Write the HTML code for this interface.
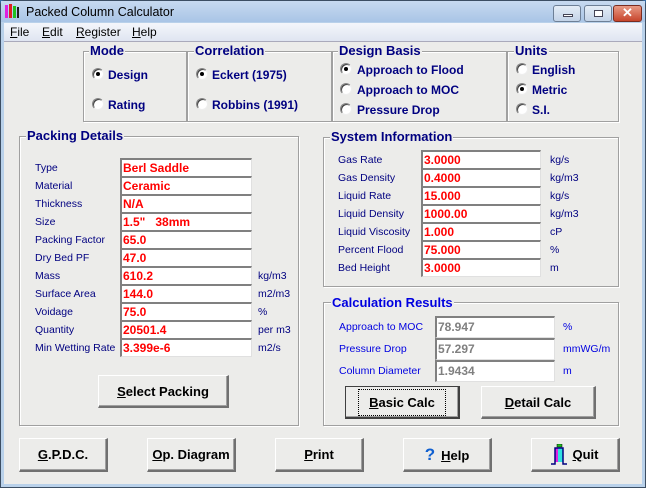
<!DOCTYPE html>
<html><head><meta charset="utf-8"><style>
*{margin:0;padding:0;box-sizing:border-box}
body{width:646px;height:488px;overflow:hidden;background:#3a6ea5;font-family:"Liberation Sans",Arial,sans-serif;position:relative}
.abs{position:absolute}
#win{position:absolute;left:0;top:0;width:646px;height:488px;background:#b9d1ea;border:1px solid #3c4e63;border-radius:5px 5px 0 0}
#title{left:1px;top:1px;width:644px;height:21px;background:linear-gradient(#c7daf0,#a9c5e6)}
#menu{left:4px;top:23px;width:638px;height:18px;background:linear-gradient(#f4f6fb,#dfe5f1);font-size:12px;color:#000}
#client{left:4px;top:41px;width:638px;height:443px;background:#ececea;border-top:1px solid #aab}
.grp{position:absolute;border:1px solid #a0a0a0;box-shadow:inset 1px 1px 0 #fff,1px 1px 0 #fff}
.gt{position:absolute;font-weight:bold;font-size:13px;color:#000080;background:#ececea;padding:0 1px;line-height:14px}
.lbl{position:absolute;font-size:10.5px;color:#000080;line-height:14px}
.fld{position:absolute;background:#fff;border-top:2px solid #808080;border-left:2px solid #808080;border-bottom:1px solid #e0e0e0;border-right:1px solid #e0e0e0;font-weight:bold;font-size:12px;color:#f00;padding-left:1px;line-height:16px}
.rad{position:absolute;width:12px;height:12px;border-radius:50%;background:#fff;border:1px solid #888;border-right-color:#eee;border-bottom-color:#eee;box-shadow:inset 1px 1px 0 #404040}
.rad.on::after{content:"";position:absolute;left:3px;top:3px;width:4px;height:4px;border-radius:50%;background:#000}
.rt{position:absolute;font-weight:bold;font-size:12px;color:#000080;line-height:14px}
.btn{position:absolute;background:#ececea;border:1px solid #fff;border-right:2px solid #707070;border-bottom:2px solid #707070;box-shadow:inset -1px -1px 0 #a0a0a0;font-weight:bold;font-size:13px;text-align:center;color:#000;display:flex;align-items:center;justify-content:center}
u{text-decoration:underline}
.wb{position:absolute;top:4px;height:17px;border:1px solid #6d7f96;border-radius:3px;background:linear-gradient(#e4edf7,#c3d3e8)}
</style></head><body>
<div id="win"></div>
<div id="title" class="abs">
 <div class="abs" style="left:4px;top:4px;width:3px;height:13px;background:#e020e0"></div>
 <div class="abs" style="left:8px;top:3px;width:3px;height:14px;background:#e02020"></div>
 <div class="abs" style="left:12px;top:5px;width:3px;height:12px;background:#20c020"></div>
 <div class="abs" style="left:16px;top:6px;width:2px;height:11px;background:#202020"></div>
 <div class="abs" style="left:25px;top:4px;font-size:12.5px;color:#000">Packed Column Calculator</div>
 <div class="wb" style="left:552px;width:28px"><div class="abs" style="left:9px;top:8px;width:10px;height:3px;background:#fff;border:1px solid #445"></div></div>
 <div class="wb" style="left:583px;width:28px"><div class="abs" style="left:9px;top:4px;width:9px;height:7px;border:1px solid #445;background:#fff"></div></div>
 <div class="wb" style="left:612px;width:29px;background:linear-gradient(#e89a85,#c7452c);border-color:#7a2c20;color:#fff;font-weight:bold;font-size:13px;text-align:center;line-height:14px">✕</div>
</div>
<div id="menu" class="abs">
 <span class="abs" style="left:6px;top:2px"><u>F</u>ile</span>
 <span class="abs" style="left:38px;top:2px"><u>E</u>dit</span>
 <span class="abs" style="left:72px;top:2px"><u>R</u>egister</span>
 <span class="abs" style="left:128px;top:2px"><u>H</u>elp</span>
</div>
<div id="client" class="abs"></div>

<div class="grp" style="left:83px;top:51px;width:104px;height:71px"></div>
<div class="grp" style="left:187px;top:51px;width:145px;height:71px"></div>
<div class="grp" style="left:332px;top:51px;width:175px;height:71px"></div>
<div class="grp" style="left:507px;top:51px;width:112px;height:71px"></div>
<div class="gt" style="left:89px;top:44px">Mode</div>
<div class="gt" style="left:194px;top:44px">Correlation</div>
<div class="gt" style="left:338px;top:44px">Design Basis</div>
<div class="gt" style="left:514px;top:44px">Units</div>

<div class="rad on" style="left:92px;top:68px"></div><div class="rt" style="left:108px;top:68px">Design</div>
<div class="rad" style="left:92px;top:98px"></div><div class="rt" style="left:108px;top:98px">Rating</div>
<div class="rad on" style="left:196px;top:68px"></div><div class="rt" style="left:212px;top:68px">Eckert (1975)</div>
<div class="rad" style="left:196px;top:98px"></div><div class="rt" style="left:212px;top:98px">Robbins (1991)</div>
<div class="rad on" style="left:340px;top:63px"></div><div class="rt" style="left:357px;top:63px">Approach to Flood</div>
<div class="rad" style="left:340px;top:83px"></div><div class="rt" style="left:357px;top:83px">Approach to MOC</div>
<div class="rad" style="left:340px;top:103px"></div><div class="rt" style="left:357px;top:103px">Pressure Drop</div>
<div class="rad" style="left:516px;top:63px"></div><div class="rt" style="left:532px;top:63px">English</div>
<div class="rad on" style="left:516px;top:83px"></div><div class="rt" style="left:532px;top:83px">Metric</div>
<div class="rad" style="left:516px;top:103px"></div><div class="rt" style="left:532px;top:103px">S.I.</div>

<div class="grp" style="left:19px;top:136px;width:280px;height:290px"></div>
<div class="gt" style="left:26px;top:129px">Packing Details</div>
<div class="lbl" style="left:35px;top:161px">Type</div><div class="fld" style="left:120px;top:158px;width:132px;height:19px">Berl Saddle</div>
<div class="lbl" style="left:35px;top:179px">Material</div><div class="fld" style="left:120px;top:176px;width:132px;height:19px">Ceramic</div>
<div class="lbl" style="left:35px;top:197px">Thickness</div><div class="fld" style="left:120px;top:194px;width:132px;height:19px">N/A</div>
<div class="lbl" style="left:35px;top:215px">Size</div><div class="fld" style="left:120px;top:212px;width:132px;height:19px">1.5"&nbsp;&nbsp; 38mm</div>
<div class="lbl" style="left:35px;top:233px">Packing Factor</div><div class="fld" style="left:120px;top:230px;width:132px;height:19px">65.0</div>
<div class="lbl" style="left:35px;top:251px">Dry Bed PF</div><div class="fld" style="left:120px;top:248px;width:132px;height:19px">47.0</div>
<div class="lbl" style="left:35px;top:269px">Mass</div><div class="fld" style="left:120px;top:266px;width:132px;height:19px">610.2</div><div class="lbl" style="left:258px;top:269px">kg/m3</div>
<div class="lbl" style="left:35px;top:287px">Surface Area</div><div class="fld" style="left:120px;top:284px;width:132px;height:19px">144.0</div><div class="lbl" style="left:258px;top:287px">m2/m3</div>
<div class="lbl" style="left:35px;top:305px">Voidage</div><div class="fld" style="left:120px;top:302px;width:132px;height:19px">75.0</div><div class="lbl" style="left:258px;top:305px">%</div>
<div class="lbl" style="left:35px;top:323px">Quantity</div><div class="fld" style="left:120px;top:320px;width:132px;height:19px">20501.4</div><div class="lbl" style="left:258px;top:323px">per m3</div>
<div class="lbl" style="left:35px;top:341px">Min Wetting Rate</div><div class="fld" style="left:120px;top:338px;width:132px;height:19px">3.399e-6</div><div class="lbl" style="left:258px;top:341px">m2/s</div>
<div class="btn" style="left:98px;top:375px;width:131px;height:33px"><span><u>S</u>elect Packing</span></div>

<div class="grp" style="left:323px;top:137px;width:296px;height:150px"></div>
<div class="gt" style="left:330px;top:130px">System Information</div>
<div class="lbl" style="left:338px;top:153px">Gas Rate</div><div class="fld" style="left:421px;top:150px;width:120px;height:19px">3.0000</div><div class="lbl" style="left:550px;top:153px">kg/s</div>
<div class="lbl" style="left:338px;top:171px">Gas Density</div><div class="fld" style="left:421px;top:168px;width:120px;height:19px">0.4000</div><div class="lbl" style="left:550px;top:171px">kg/m3</div>
<div class="lbl" style="left:338px;top:189px">Liquid Rate</div><div class="fld" style="left:421px;top:186px;width:120px;height:19px">15.000</div><div class="lbl" style="left:550px;top:189px">kg/s</div>
<div class="lbl" style="left:338px;top:207px">Liquid Density</div><div class="fld" style="left:421px;top:204px;width:120px;height:19px">1000.00</div><div class="lbl" style="left:550px;top:207px">kg/m3</div>
<div class="lbl" style="left:338px;top:225px">Liquid Viscosity</div><div class="fld" style="left:421px;top:222px;width:120px;height:19px">1.000</div><div class="lbl" style="left:550px;top:225px">cP</div>
<div class="lbl" style="left:338px;top:243px">Percent Flood</div><div class="fld" style="left:421px;top:240px;width:120px;height:19px">75.000</div><div class="lbl" style="left:550px;top:243px">%</div>
<div class="lbl" style="left:338px;top:261px">Bed Height</div><div class="fld" style="left:421px;top:258px;width:120px;height:19px">3.0000</div><div class="lbl" style="left:550px;top:261px">m</div>

<div class="grp" style="left:323px;top:302px;width:296px;height:124px"></div>
<div class="gt" style="left:331px;top:296px;color:#0000e0">Calculation Results</div>
<div class="lbl" style="left:339px;top:320px;color:#0000e0">Approach to MOC</div><div class="fld" style="left:435px;top:316px;width:120px;height:22px;color:#808080;line-height:18px">78.947</div><div class="lbl" style="left:563px;top:320px;color:#0000e0">%</div>
<div class="lbl" style="left:339px;top:342px;color:#0000e0">Pressure Drop</div><div class="fld" style="left:435px;top:338px;width:120px;height:22px;color:#808080;line-height:18px">57.297</div><div class="lbl" style="left:563px;top:342px;color:#0000e0">mmWG/m</div>
<div class="lbl" style="left:339px;top:364px;color:#0000e0">Column Diameter</div><div class="fld" style="left:435px;top:360px;width:120px;height:22px;color:#808080;line-height:18px">1.9434</div><div class="lbl" style="left:563px;top:364px;color:#0000e0">m</div>
<div class="btn" style="left:345px;top:386px;width:115px;height:33px;border:1px solid #404040;border-right:2px solid #404040;border-bottom:2px solid #404040"><span style="border:1px dotted #000;padding:5px 10px"><u>B</u>asic Calc</span></div>
<div class="btn" style="left:481px;top:386px;width:115px;height:33px"><span><u>D</u>etail Calc</span></div>

<div class="btn" style="left:19px;top:438px;width:89px;height:34px"><span><u>G</u>.P.D.C.</span></div>
<div class="btn" style="left:147px;top:438px;width:89px;height:34px"><span><u>O</u>p. Diagram</span></div>
<div class="btn" style="left:275px;top:438px;width:89px;height:34px"><span><u>P</u>rint</span></div>
<div class="btn" style="left:403px;top:438px;width:89px;height:34px"><span><span style="color:#1060d0;font-size:17px;margin-right:6px">?</span><u>H</u>elp</span></div>
<div class="btn" style="left:531px;top:438px;width:89px;height:34px"><span style="display:flex;align-items:center"><svg width="16" height="22" viewBox="0 0 16 22" style="margin-right:5px"><rect x="6" y="0" width="5" height="3" fill="#20c020" stroke="#000" stroke-width=".5"/><rect x="4" y="4" width="3" height="14" fill="#e020e0"/><rect x="7" y="4" width="5" height="14" fill="#30e0e0"/><path d="M0 20H4V4H12V20H16" fill="none" stroke="#000080" stroke-width="1.5"/></svg><u>Q</u>uit</span></div>
</body></html>
